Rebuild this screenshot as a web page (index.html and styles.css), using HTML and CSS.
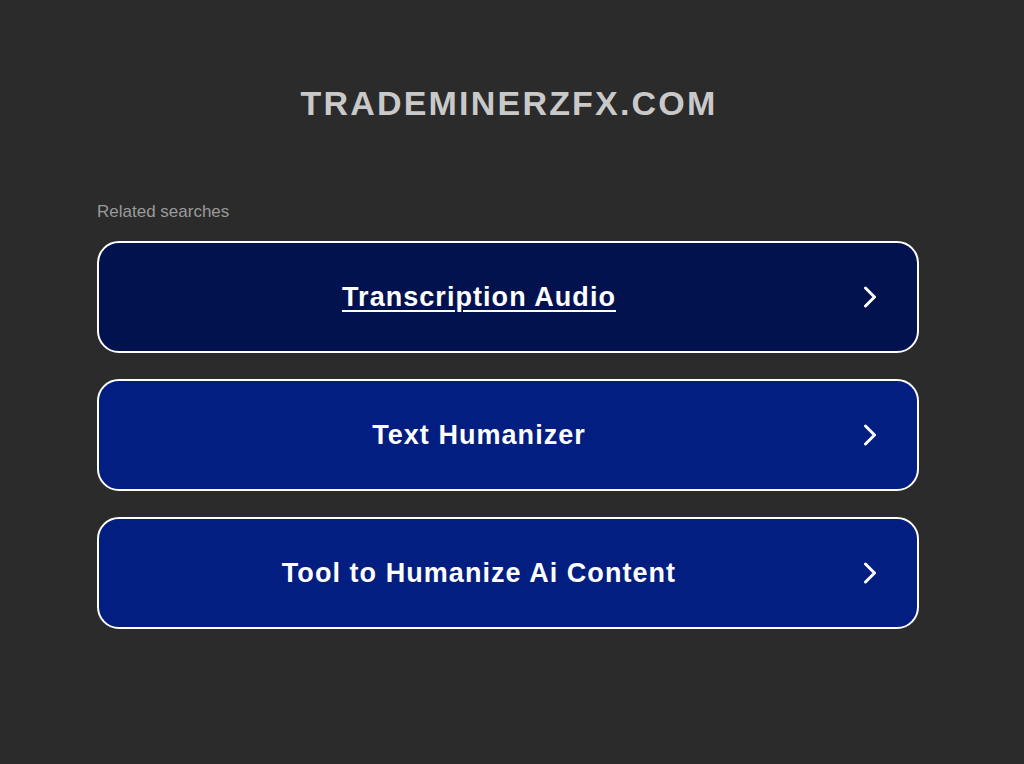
FILE: index.html
```html
<!DOCTYPE html>
<html>
<head>
<meta charset="utf-8">
<link rel="stylesheet" href="styles.css">
</head>
<body>
<div class="page">
  <h1 class="domain">TRADEMINERZFX.COM</h1>
  <div class="related">Related searches</div>
  <div class="list">
    <a class="card card-active" href="#">
      <span class="label">Transcription Audio</span>
      <svg class="chev" width="14" height="22" viewBox="0 0 14 22"><path d="M2.5 2 L11.5 11 L2.5 20" fill="none" stroke="#fff" stroke-width="3" stroke-linecap="round" stroke-linejoin="round"/></svg>
    </a>
    <a class="card" href="#">
      <span class="label">Text Humanizer</span>
      <svg class="chev" width="14" height="22" viewBox="0 0 14 22"><path d="M2.5 2 L11.5 11 L2.5 20" fill="none" stroke="#fff" stroke-width="3" stroke-linecap="round" stroke-linejoin="round"/></svg>
    </a>
    <a class="card" href="#">
      <span class="label">Tool to Humanize Ai Content</span>
      <svg class="chev" width="14" height="22" viewBox="0 0 14 22"><path d="M2.5 2 L11.5 11 L2.5 20" fill="none" stroke="#fff" stroke-width="3" stroke-linecap="round" stroke-linejoin="round"/></svg>
    </a>
  </div>
</div>
</body>
</html>
```
FILE: styles.css
```css
html, body {
  margin: 0;
  padding: 0;
  background: #2b2b2b;
  font-family: "Liberation Sans", Arial, sans-serif;
}
.page {
  width: 822px;
  margin-left: 97px;
  padding-top: 84px;
}
.domain {
  margin: 0;
  text-align: center;
  font-size: 34px;
  line-height: 1.15;
  font-weight: bold;
  color: #c9c9c9;
  letter-spacing: 2.2px;
  text-indent: 2px;
}
.related {
  margin-top: 79px;
  font-size: 17px;
  line-height: 20px;
  color: #9a9a9a;
}
.list {
  margin-top: 19px;
  display: flex;
  flex-direction: column;
  gap: 26px;
}
.card {
  box-sizing: border-box;
  height: 112px;
  display: flex;
  align-items: center;
  border: 2px solid #ffffff;
  border-radius: 22px;
  background: #011e80;
  color: #ffffff;
  text-decoration: none;
  padding-right: 40px;
}
.card-active {
  background: #02124f;
}
.label {
  flex: 1;
  text-align: center;
  font-size: 27px;
  font-weight: bold;
  letter-spacing: 1.05px;
  margin-right: 4px;
}
.card-active .label {
  text-decoration: underline;
  text-decoration-thickness: 2px;
  text-underline-offset: 4px;
}
.chev {
  display: block;
}
```
